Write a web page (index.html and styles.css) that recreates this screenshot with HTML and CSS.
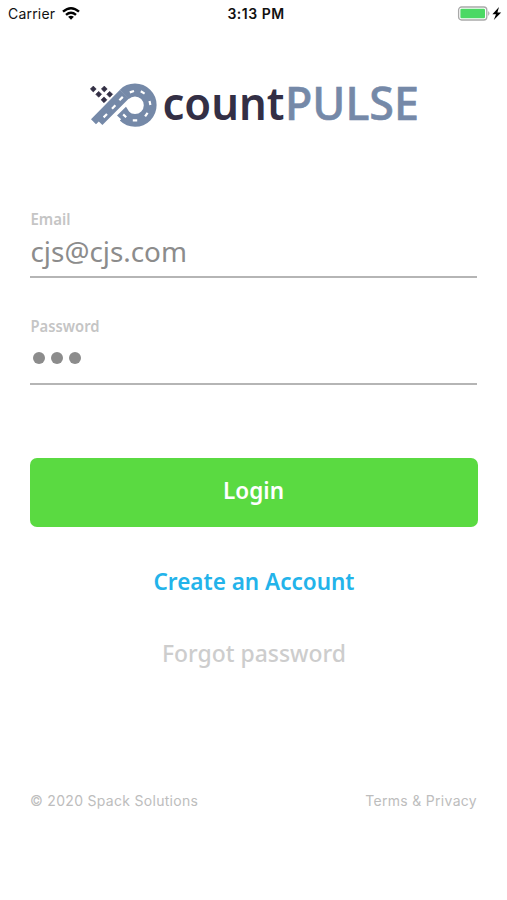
FILE: index.html
```html
<!DOCTYPE html>
<html lang="en">
<head>
<meta charset="utf-8">
<meta name="viewport" content="width=device-width">
<title>countPULSE</title>
<link rel="stylesheet" href="styles.css">
</head>
<body>
<header class="status">
  <div class="carrier"><span>Carrier</span>
    <svg width="18" height="14" viewBox="0 0 18 14" fill="none" stroke="#000" stroke-width="2.4"><path d="M1 4.7Q9-2.3 17 4.7M4 7.8Q9 3.5 14 7.8"/><path d="M9 12.7 6.1 9.8Q9 7.5 11.9 9.8Z" fill="#000" stroke="none"/></svg>
  </div>
  <time class="time">3:13 PM</time>
  <svg class="battery" width="45" height="16" viewBox="0 0 45 16"><rect x="1.6" y="1" width="28.2" height="13" rx="3" fill="#fff" stroke="#a9a9a9" stroke-width="1.3"/><rect x="3.4" y="2.8" width="24.6" height="9.4" rx="1.2" fill="#4bd964"/><path d="M31.2 5.1Q33.8 7.5 31.2 9.9Z" fill="#a9a9a9"/><path d="M42 1 35.4 8.2H39L36.8 14 44.2 6.4H40.4Z" fill="#000"/></svg>
</header>
<main>
  <h1 class="logo">
    <svg width="332" height="52" viewBox="0 0 332 52">
      <g transform="translate(-90 -80)">
        <path d="M124.2 94.5A15.2 15.2 0 1 1 124.3 116" fill="none" stroke="#7589a8" stroke-width="12.8"/>
        <path d="M119.8 90 91 119.3 96 124.2 98.8 121.4 102.4 125 128.9 98.6ZM117 115.5 126 106.7 129.3 112 122.5 120.5Z" fill="#7589a8"/>
        <path d="M119.4 100.3 122.8 96.9M112 108.7 115.4 105.3M103.6 117.4 107 114M129.8 92.4 134 91M140.8 91.2 144.6 93.6M149.5 101 150.4 105M147.6 112.8 145.1 116.4M137.2 120.4H132.8M126.2 117.2 123.2 114.4" fill="none" stroke="#fff" stroke-width="2.2"/>
        <path d="M93.3 86.1 96.2 89 93.3 91.9 90.4 89ZM104.3 86.1 107.2 89 104.3 91.9 101.4 89ZM98.7 91.4 101.6 94.3 98.7 97.2 95.8 94.3ZM109.7 91.4 112.6 94.3 109.7 97.2 106.8 94.3ZM104 96.9 106.9 99.8 104 102.7 101.1 99.8Z" fill="#332f45" stroke="#332f45" stroke-width=".7" stroke-linejoin="round"/>
      </g>
      <text class="count" x="72.5" y="40" textLength="122" lengthAdjust="spacingAndGlyphs">count</text>
      <text class="pulse" x="195" y="40" textLength="134" lengthAdjust="spacingAndGlyphs">PULSE</text>
    </svg>
  </h1>
  <form>
    <div class="field"><svg class="label" width="90" height="22"><text x="0.5" y="16.5" textLength="40" lengthAdjust="spacingAndGlyphs">Email</text></svg>
      <div class="value"><svg width="220" height="40"><text x="0.5" y="26" textLength="156.5" lengthAdjust="spacingAndGlyphs">cjs@cjs.com</text></svg></div></div>
    <div class="field"><svg class="label" width="90" height="22"><text x="0.5" y="16.5" textLength="69" lengthAdjust="spacingAndGlyphs">Password</text></svg>
      <div class="value dots"><i></i><i></i><i></i></div></div>
    <button class="login" type="button"><svg width="61" height="38"><text x="0" y="26" textLength="61" lengthAdjust="spacingAndGlyphs">Login</text></svg></button>
  </form>
  <a class="link create"><svg width="201" height="38"><text x="0.5" y="26" textLength="201" lengthAdjust="spacingAndGlyphs">Create an Account</text></svg></a>
  <a class="link forgot"><svg width="184" height="38"><text x="0" y="26" textLength="184" lengthAdjust="spacingAndGlyphs">Forgot password</text></svg></a>
</main>
<footer><span class="copy">© 2020 Spack Solutions</span><span class="terms">Terms &amp; Privacy</span></footer>
</body>
</html>
```
FILE: styles.css
```css
* { box-sizing: border-box; }
body { margin: 0; width: 507px; height: 900px; background: #fff; font-family: "Noto Sans", sans-serif; overflow: hidden; }
svg { display: block; flex: none; overflow: visible; }
.status { height: 28px; padding: 0 5px 0 8px; display: grid; grid-template-columns: 1fr auto 1fr; align-items: center; font: 14px/28px Inter, sans-serif; color: #111; }
.carrier { display: flex; align-items: center; gap: 7px; letter-spacing: .2px; }
.time { font-weight: 600; letter-spacing: .5px; padding-left: 2px; }
.battery { justify-self: end; }
main { padding: 0 30px; display: flex; flex-direction: column; }
.logo { margin: 52px 0 0 60px; height: 52px; }
.count { font-size: 45px; font-weight: 600; fill: #332f45; }
.pulse { font-size: 46px; font-weight: 500; fill: #7589a8; stroke: #7589a8; stroke-width: .6px; }
form { margin-top: 76px; }
.field { height: 107px; }
.label { font-size: 15.5px; font-weight: 600; fill: #c5c5c5; }
.value { height: 48px; border-bottom: 2px solid #b5b5b5; padding-top: 6px; font-size: 27px; fill: #8c8c8c; }
.dots { display: flex; gap: 6px; padding: 15px 0 0 3px; }
.dots i { width: 12px; height: 12px; border-radius: 50%; background: #8c8c8c; }
.login { width: 447.5px; height: 69px; margin-top: 35.5px; border: 0; border-radius: 7px; background: #5ada41; display: flex; align-items: center; justify-content: center; font: 600 23.5px "Noto Sans", sans-serif; fill: #fff; }
.link { display: flex; justify-content: center; height: 38px; font-size: 23.5px; font-weight: 600; fill: #23b3ea; }
.create { margin-top: 37.5px; }
.forgot { margin-top: 34px; fill: #cdcdcd; font-weight: 500; }
footer { margin: 117px 30px 0; display: flex; justify-content: space-between; font: 14px/20px Inter, sans-serif; color: #bdbdbd; letter-spacing: .3px; }
```
